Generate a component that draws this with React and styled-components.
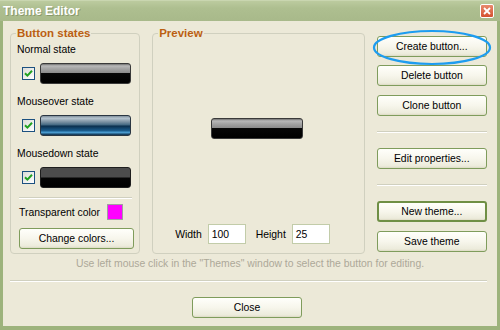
import styled, { createGlobalStyle } from "styled-components";

const GlobalStyle = createGlobalStyle`
  html, body {
    margin: 0;
    padding: 0;
    background: #ece9d8;
  }
  body {
    font-family: "Liberation Sans", Arial, sans-serif;
    font-size: 10.4px;
    color: #000;
  }
`;

const Window = styled.div`
  width: 500px;
  height: 330px;
  display: flex;
  flex-direction: column;
  box-sizing: border-box;
  background: #ece9d8;
  overflow: hidden;
`;

const TitleBar = styled.div`
  height: 21px;
  flex: none;
  display: flex;
  align-items: center;
  justify-content: space-between;
  padding: 0 6px 0 3px;
  background: linear-gradient(#bccb9f 0%, #aebf90 35%, #a8b98a 100%);
  border-top: 1px solid #c9d6b0;
  box-sizing: border-box;
`;

const Title = styled.span`
  color: #fff;
  font-weight: bold;
  font-size: 12px;
  text-shadow: 1px 1px 0 #8a9a6c;
`;

const CloseX = styled.div`
  width: 12px;
  height: 12px;
  border: 1px solid #fff;
  border-radius: 2px;
  background: linear-gradient(#e88a6e, #d4502f);
  display: flex;
  align-items: center;
  justify-content: center;
`;

const Frame = styled.div`
  flex: 1;
  display: flex;
  flex-direction: column;
  border: 3px solid #9db37c;
  border-top: none;
  border-bottom-width: 4px;
  padding: 6px 10px 0 7px;
  min-height: 0;
`;

const TopRow = styled.div`
  display: flex;
  align-items: flex-start;
`;

const Group = styled.fieldset`
  box-sizing: border-box;
  width: ${(p) => p.$w}px;
  height: 227px;
  margin: 0 12px 0 0;
  padding: 0 6px 0 6px;
  border: 1px solid #d0d0bf;
  border-radius: 4px;
  min-width: 0;
`;

const Legend = styled.legend`
  padding: 0 1px;
  margin-left: -1px;
  font-weight: bold;
  font-size: 11.5px;
  line-height: 13px;
  color: #bb5f12;
`;

const Label = styled.div`
  line-height: 13px;
  margin-top: ${(p) => p.$mt || 0}px;
  white-space: nowrap;
`;

const StateRow = styled.div`
  display: flex;
  align-items: center;
  gap: 5px;
  padding-left: 5px;
  margin-top: 7px;
`;

const CheckBox = styled.div`
  width: 11px;
  height: 11px;
  border: 1px solid #1c5180;
  background: linear-gradient(135deg, #dcdcd7, #ffffff);
  display: flex;
  align-items: center;
  justify-content: center;
`;

const skins = {
  normal: `
    border: 1px solid #3a3a3a;
    background: linear-gradient(#6f6f6f 0%, #b9b9b9 10%, #a4a4a4 25%, #8a8a8a 48%, #070707 50%, #000 100%);
  `,
  over: `
    border: 1px solid #2a3642;
    background: linear-gradient(#7f8f9c 0%, #b4c3ce 12%, #7e93a4 30%, #3f6580 48%, #0a2d4b 52%, #1b5d8e 78%, #4da1d6 86%, #0b2a45 100%);
  `,
  down: `
    border: 1px solid #1e1e1e;
    background: linear-gradient(#4c4c4c 0%, #4c4c4c 48%, #050505 52%, #000 100%);
  `,
};

const SkinButton = styled.div`
  width: ${(p) => p.$w || 89}px;
  height: 19px;
  border-radius: 3px;
  ${(p) => skins[p.$skin]}
`;

const Divider = styled.div`
  height: 0;
  border-top: 1px solid #d0d0bf;
  border-bottom: 1px solid #fff;
  margin: ${(p) => p.$m};
`;

const ColorRow = styled.div`
  display: flex;
  align-items: center;
  justify-content: space-between;
  padding: 0 10px 0 2px;
  margin-top: 5px;
`;

const Swatch = styled.div`
  width: 14px;
  height: 14px;
  border: 1px solid #a0a0a0;
  background: #ff00ff;
`;

const XPButton = styled.button`
  box-sizing: border-box;
  width: ${(p) => p.$w || 110}px;
  height: 21px;
  margin: ${(p) => p.$m || 0};
  padding: 0;
  font-family: "Liberation Sans", Arial, sans-serif;
  font-size: 10.4px;
  color: #000;
  border: ${(p) => (p.$default ? "2px solid #6f8f45" : "1px solid #7f9c5c")};
  border-radius: 3px;
  background: linear-gradient(#fffffb 0%, #f7f6ec 50%, #ecebdb 90%, #dcdac4 100%);
  position: relative;
`;

const PreviewBody = styled.div`
  display: flex;
  flex-direction: column;
  height: 212px;
`;

const PreviewStage = styled.div`
  flex: 1;
  display: flex;
  align-items: center;
  justify-content: center;
  padding-right: 2px;
  padding-bottom: 8px;
`;

const SizeRow = styled.div`
  display: flex;
  align-items: center;
  padding-left: 16px;
  margin-bottom: 8px;
  gap: 6px;
`;

const SizeInput = styled.div`
  box-sizing: border-box;
  width: 38px;
  height: 20px;
  border: 1px solid #c2cca9;
  background: #fff;
  padding: 3px 3px;
  line-height: 13px;
  margin-right: ${(p) => p.$mr || 0}px;
`;

const SideColumn = styled.div`
  display: flex;
  flex-direction: column;
  width: 111px;
  padding-top: 9px;
`;

const Ring = styled.svg`
  position: absolute;
  left: -6px;
  top: -8px;
  pointer-events: none;
`;

const Hint = styled.div`
  text-align: center;
  color: #aca899;
  line-height: 13px;
  margin-top: 3px;
  padding-left: 3px;
`;

const Footer = styled.div`
  display: flex;
  justify-content: center;
  padding-right: 3px;
`;

const Check = () => (
  <svg width="9" height="9" viewBox="0 0 9 9">
    <path d="M1 4.2 L3.4 6.6 L8 1.8" stroke="#21a121" strokeWidth="2" fill="none" />
  </svg>
);

const states = [
  { label: "Normal state", skin: "normal" },
  { label: "Mouseover state", skin: "over" },
  { label: "Mousedown state", skin: "down" },
];

export default function App() {
  return (
    <>
      <GlobalStyle />
      <Window>
        <TitleBar>
          <Title>Theme Editor</Title>
          <CloseX>
            <svg width="8" height="8" viewBox="0 0 8 8">
              <path d="M1 1 L7 7 M7 1 L1 7" stroke="#fff" strokeWidth="1.8" />
            </svg>
          </CloseX>
        </TitleBar>
        <Frame>
          <TopRow>
            <Group $w={131}>
              <Legend>Button states</Legend>
              {states.map((s, i) => (
                <div key={s.skin}>
                  <Label $mt={i === 0 ? 3 : 11}>{s.label}</Label>
                  <StateRow>
                    <CheckBox>
                      <Check />
                    </CheckBox>
                    <SkinButton $skin={s.skin} />
                  </StateRow>
                </div>
              ))}
              <Divider $m="9px 1px 0 2px" />
              <ColorRow>
                <span>Transparent color</span>
                <Swatch />
              </ColorRow>
              <XPButton $w={115} $m="8px 0 0 2px">
                Change colors...
              </XPButton>
            </Group>
            <Group $w={214}>
              <Legend>Preview</Legend>
              <PreviewBody>
                <PreviewStage>
                  <SkinButton $skin="normal" $w={90} />
                </PreviewStage>
                <SizeRow>
                  <span>Width</span>
                  <SizeInput $mr={4}>100</SizeInput>
                  <span>Height</span>
                  <SizeInput>25</SizeInput>
                </SizeRow>
              </PreviewBody>
            </Group>
            <SideColumn>
              <XPButton>
                Create button...
                <Ring width="120" height="37" viewBox="0 0 120 37">
                  <ellipse cx="60" cy="18.5" rx="58" ry="16.5" fill="none" stroke="#1d9cf0" strokeWidth="2.2" />
                </Ring>
              </XPButton>
              <XPButton $m="8px 0 0 0">Delete button</XPButton>
              <XPButton $m="9px 0 0 0">Clone button</XPButton>
              <Divider $m="15px 0 0 0" />
              <XPButton $m="15px 0 0 0">Edit properties...</XPButton>
              <Divider $m="15px 0 0 0" />
              <XPButton $default $m="15px 0 0 0">New theme...</XPButton>
              <XPButton $m="9px 0 0 0">Save theme</XPButton>
            </SideColumn>
          </TopRow>
          <Hint>Use left mouse click in the "Themes" window to select the button for editing.</Hint>
          <Divider $m="10px 0 0 0" />
          <Footer>
            <XPButton $m="15px 0 0 0">Close</XPButton>
          </Footer>
        </Frame>
      </Window>
    </>
  );
}
